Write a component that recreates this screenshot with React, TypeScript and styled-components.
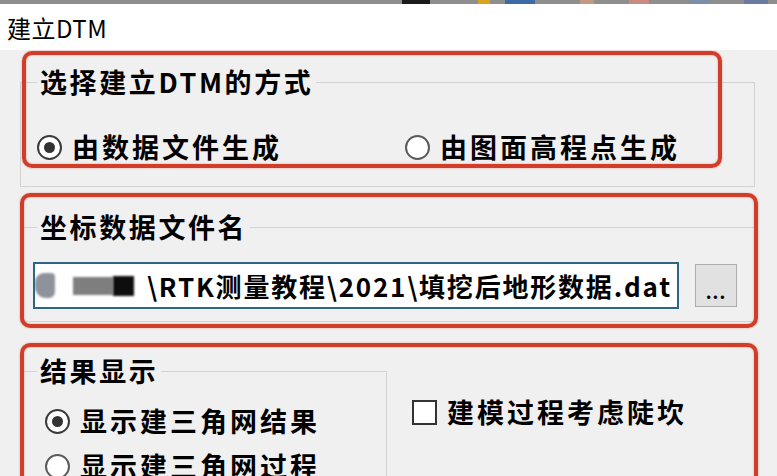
import * as React from 'react';
import styled, { createGlobalStyle } from 'styled-components';

const FONT = `"Noto Sans CJK SC", "Noto Sans", sans-serif`;

const GlobalStyle = createGlobalStyle`
    html, body {
        margin: 0;
        padding: 0;
        width: 777px;
        height: 476px;
        overflow: hidden;
        background: #f0f0f0;
    }
    body {
        font-family: ${FONT};
        color: #000;
    }
`;

const Window = styled.div`
    display: flex;
    flex-direction: column;
    width: 777px;
    height: 476px;
    overflow: hidden;
`;

const DesktopStrip = styled.div`
    display: flex;
    flex: 0 0 4px;
    height: 4px;
    background: #8e8e8e;
    padding-left: 300px;
`;

const StripChip = styled.span<{ $color: string; $width: number; $gap: number }>`
    width: ${p => p.$width}px;
    margin-left: ${p => p.$gap}px;
    background: ${p => p.$color};
`;

const TitleBar = styled.div`
    flex: 0 0 46px;
    height: 46px;
    display: flex;
    align-items: center;
    padding-left: 7px;
    background: #fff;
    font-size: 24px;
    font-weight: 400;
    letter-spacing: 0.5px;
`;

const Body = styled.div`
    position: relative;
    flex: 1 0 auto;
    display: flex;
    flex-direction: column;
    padding: 17px 0 0 20px;
    background: #f0f0f0;
`;

const GroupBox = styled.fieldset<{ $width: number; $padLeft: number; $padTop: number; $padBottom: number; $spaceAbove?: number }>`
    box-sizing: border-box;
    width: ${p => p.$width}px;
    margin: ${p => p.$spaceAbove ?? 0}px 0 0 0;
    padding: ${p => p.$padTop}px 0 ${p => p.$padBottom}px ${p => p.$padLeft}px;
    border: 1px solid #d3d3d3;
    border-radius: 0;
    flex: 0 0 auto;
`;

const GroupTitle = styled.legend<{ $offset: number }>`
    margin-left: ${p => p.$offset}px;
    padding: 0 3px;
    font-size: 27px;
    line-height: 30px;
    font-weight: 700;
    letter-spacing: 2.6px;
    white-space: nowrap;
`;

const OptionColumn = styled.div<{ $gap?: number }>`
    display: flex;
    flex-direction: column;
    gap: ${p => p.$gap ?? 0}px;
`;

const InlineRow = styled.div`
    display: flex;
    align-items: center;
`;

const Option = styled.label<{ $width?: number }>`
    display: flex;
    align-items: center;
    gap: 10px;
    height: 30px;
    ${p => (p.$width ? `width: ${p.$width}px;` : '')}
    flex: 0 0 auto;
    font-size: 27px;
    line-height: 30px;
    font-weight: 700;
    letter-spacing: 3px;
    white-space: nowrap;
`;

const RadioMark = styled.span<{ $checked?: boolean }>`
    box-sizing: border-box;
    width: 25px;
    height: 25px;
    border-radius: 50%;
    border: 2px solid ${p => (p.$checked ? '#3a3a3a' : '#5a5a5a')};
    background: #fff;
    display: flex;
    align-items: center;
    justify-content: center;
    flex: 0 0 auto;

    &::after {
        content: '';
        width: 11px;
        height: 11px;
        border-radius: 50%;
        background: ${p => (p.$checked ? '#333' : 'transparent')};
    }
`;

const CheckMark = styled.span`
    box-sizing: border-box;
    width: 25px;
    height: 25px;
    border: 2px solid #333;
    background: #fff;
    flex: 0 0 auto;
`;

const FileRow = styled.div`
    display: flex;
    align-items: flex-start;
    gap: 16px;
`;

const PathField = styled.div`
    box-sizing: border-box;
    width: 646px;
    height: 47px;
    border: 2px solid #2d6685;
    background: #fff;
    display: flex;
    align-items: center;
    overflow: hidden;
`;

const Redaction = styled.span<{ $w: number; $h: number; $color: string; $gap: number; $round?: string }>`
    width: ${p => p.$w}px;
    height: ${p => p.$h}px;
    margin-left: ${p => p.$gap}px;
    background: ${p => p.$color};
    border-radius: ${p => p.$round ?? '0'};
    filter: blur(0.8px);
    flex: 0 0 auto;
`;

const PathText = styled.span`
    margin-left: 13px;
    font-size: 26px;
    line-height: 30px;
    font-weight: 700;
    letter-spacing: 1.8px;
    white-space: nowrap;
`;

const BrowseButton = styled.button`
    box-sizing: border-box;
    width: 42px;
    height: 43px;
    margin-top: 2px;
    padding: 10px 0 0;
    border: 1px solid #adadad;
    background: #e1e1e1;
    font-family: ${FONT};
    font-size: 18px;
    font-weight: 700;
    color: #000;
    display: flex;
    align-items: center;
    justify-content: center;
    letter-spacing: 1px;
`;

const SplitRow = styled.div`
    display: flex;
    align-items: flex-start;
    margin-top: 34px;
`;

const SideOption = styled.div`
    margin: 41px 0 0 25px;
`;

const Highlight = styled.div<{ $left: number; $top: number; $width: number; $height: number }>`
    position: absolute;
    left: ${p => p.$left}px;
    top: ${p => p.$top}px;
    width: ${p => p.$width}px;
    height: ${p => p.$height}px;
    box-sizing: border-box;
    border: 4px solid #d23d29;
    border-radius: 10px;
    box-shadow: 0 0 2px rgba(230, 90, 70, 0.6), inset 0 0 2px rgba(230, 90, 70, 0.6);
    pointer-events: none;
`;

const stripChips = [
    { color: '#1b1b1b', width: 28, gap: 102 },
    { color: '#d9a520', width: 12, gap: 48 },
    { color: '#3f6aa8', width: 30, gap: 15 },
    { color: '#c29a80', width: 14, gap: 45 },
    { color: '#c98a80', width: 20, gap: 35 },
    { color: '#7d8fa8', width: 20, gap: 40 },
    { color: '#6a7aa0', width: 24, gap: 35 },
];

export default function App() {
    return (
        <Window>
            <GlobalStyle />
            <DesktopStrip>
                {stripChips.map((c, i) => (
                    <StripChip key={i} $color={c.color} $width={c.width} $gap={c.gap} />
                ))}
            </DesktopStrip>
            <TitleBar>建立DTM</TitleBar>
            <Body>
                <GroupBox $width={735} $padLeft={16} $padTop={35} $padBottom={24}>
                    <GroupTitle $offset={0}>选择建立DTM的方式</GroupTitle>
                    <InlineRow>
                        <Option $width={368}>
                            <RadioMark $checked />
                            由数据文件生成
                        </Option>
                        <Option>
                            <RadioMark />
                            由图面高程点生成
                        </Option>
                    </InlineRow>
                </GroupBox>

                <GroupBox $width={735} $padLeft={12} $padTop={20} $padBottom={12} $spaceAbove={25}>
                    <GroupTitle $offset={4}>坐标数据文件名</GroupTitle>
                    <FileRow>
                        <PathField>
                            <Redaction $w={20} $h={25} $gap={0} $color="#8d929b" $round="9px 4px 6px 11px" />
                            <Redaction $w={40} $h={18} $gap={18} $color="#7e7e7e" />
                            <Redaction $w={21} $h={20} $gap={0} $color="#0e0e0e" />
                            <PathText>\RTK测量教程\2021\填挖后地形数据.dat</PathText>
                        </PathField>
                        <BrowseButton type="button">...</BrowseButton>
                    </FileRow>
                </GroupBox>

                <SplitRow>
                    <GroupBox $width={367} $padLeft={24} $padTop={20} $padBottom={20}>
                        <GroupTitle $offset={-8}>结果显示</GroupTitle>
                        <OptionColumn $gap={15}>
                            <Option>
                                <RadioMark $checked />
                                显示建三角网结果
                            </Option>
                            <Option>
                                <RadioMark />
                                显示建三角网过程
                            </Option>
                        </OptionColumn>
                    </GroupBox>
                    <SideOption>
                        <Option>
                            <CheckMark />
                            建模过程考虑陡坎
                        </Option>
                    </SideOption>
                </SplitRow>

                <Highlight $left={22} $top={1} $width={700} $height={117} />
                <Highlight $left={20} $top={143} $width={738} $height={135} />
                <Highlight $left={20} $top={293} $width={738} $height={220} />
            </Body>
        </Window>
    );
}
